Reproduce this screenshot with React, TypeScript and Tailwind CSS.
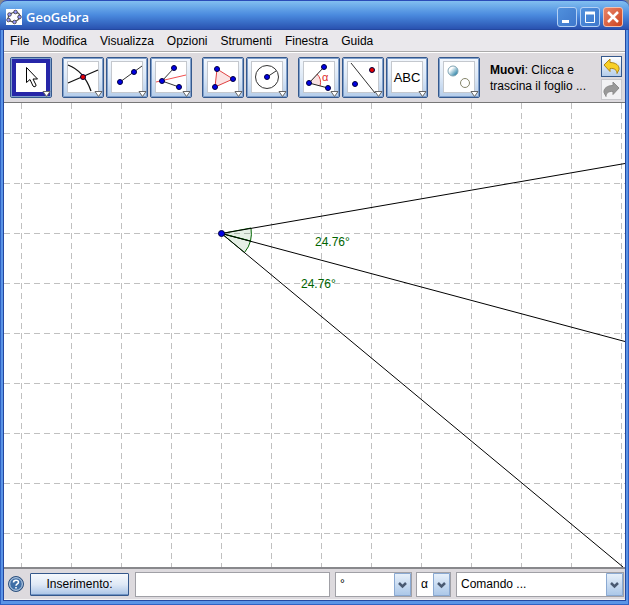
import type { ReactNode } from "react";

const menus = ["File", "Modifica", "Visualizza", "Opzioni", "Strumenti", "Finestra", "Guida"];

const BLUE = "#0000e6";
const RED = "#e60000";

function Dot({ x, y, fill = BLUE, r = 2.5 }: { x: number; y: number; fill?: string; r?: number }) {
  return <circle cx={x} cy={y} r={r} fill={fill} stroke="#000040" strokeWidth="1" />;
}

type Tool = { name: string; icon: ReactNode };

const toolGroups: Tool[][] = [
  [
    {
      name: "Muovi",
      icon: (
        <path
          d="M16.5 10.5v15l3.5-3 3 6.5c1 1.5 3.5.5 3-1l-3-6h4.5z"
          fill="#fff"
          stroke="#000"
          strokeWidth="1"
        />
      ),
    },
  ],
  [
    {
      name: "Intersezione",
      icon: (
        <>
          <path d="M6 8Q22 14 29 34M6 26L36 13" fill="none" stroke="#111" strokeWidth="1.3" />
          <Dot x={21} y={20} fill={RED} />
        </>
      ),
    },
    {
      name: "Segmento",
      icon: (
        <>
          <path d="M14 25L36 9" stroke="#333" />
          <Dot x={14} y={25} />
          <Dot x={28} y={15} />
        </>
      ),
    },
    {
      name: "Bisettrice",
      icon: (
        <>
          <path d="M24 11L12 24L29 30" fill="none" stroke="#333" />
          <path d="M6 25L36 18" stroke="#f05050" />
          <Dot x={12} y={24} />
          <Dot x={24} y={11} />
          <Dot x={29} y={30} />
        </>
      ),
    },
  ],
  [
    {
      name: "Poligono",
      icon: (
        <>
          <path d="M15 12L31 22L13 30z" fill="#fae3e3" stroke="#e04040" />
          <Dot x={15} y={12} />
          <Dot x={31} y={22} />
          <Dot x={13} y={30} />
        </>
      ),
    },
    {
      name: "Circonferenza",
      icon: (
        <>
          <circle cx="21" cy="20" r="11.5" fill="none" stroke="#333" />
          <path d="M21 20L30 14" stroke="#333" />
          <Dot x={21} y={20} />
        </>
      ),
    },
  ],
  [
    {
      name: "Angolo",
      icon: (
        <>
          <path d="M11 26L19 17Q24 22 22 29z" fill="#fae3e3" />
          <path d="M19 17Q24 22 22 29" fill="none" stroke="#e04040" />
          <path d="M26 10L11 26L30 31" fill="none" stroke="#222" />
          <text x="24" y="24" fill="#e03030" className="text-[11px]">α</text>
          <Dot x={11} y={26} />
          <Dot x={26} y={10} />
          <Dot x={30} y={31} />
        </>
      ),
    },
    {
      name: "Simmetria",
      icon: (
        <>
          <path d="M9 6L33 36" stroke="#333" />
          <Dot x={13} y={27} />
          <Dot x={30} y={13} fill={RED} />
        </>
      ),
    },
    {
      name: "Testo",
      icon: (
        <text x="21" y="25" textAnchor="middle" className="text-[13px]">ABC</text>
      ),
    },
  ],
  [
    {
      name: "Mostra / nascondi",
      icon: (
        <>
          <circle cx="15" cy="14" r="5" fill="url(#ball)" stroke="#7fa4b4" />
          <circle cx="27" cy="26" r="4.5" fill="#fff" stroke="#85856a" />
        </>
      ),
    },
  ],
];

function ToolButton({ tool, active }: { tool: Tool; active: boolean }) {
  return (
    <button
      type="button"
      aria-label={tool.name}
      aria-pressed={active}
      className="h-[41px] w-[42px] shrink-0 rounded-[2px] border border-[#34588c] bg-gradient-to-b from-[#f4f8fd] via-[#dce8f6] to-[#b5cdea]"
    >
      <svg viewBox="1 1 40 39" className="block size-full">
        <path d="M1.5 39.5V1.500h39v38z" fill="none" stroke="#7f9fcb" />
        {active ? (
          <rect x="4" y="4" width="34" height="33" fill="#fff" stroke="#2626a8" strokeWidth="4" />
        ) : (
          <rect x="5.5" y="4.5" width="31" height="31" fill="#fff" stroke="#c4c8ce" />
        )}
        {tool.icon}
        <path d="M33 34.500h7l-3.500 5z" fill="#fff" stroke="#666" />
      </svg>
    </button>
  );
}

const logoDots = [
  [9.5, 3],
  [3.5, 5.5],
  [2.5, 11],
  [8.5, 13],
  [13.5, 8],
];

function TitleBar() {
  const control = "flex h-5 w-5 items-center justify-center rounded-[3px] border";
  return (
    <header className="flex h-[30px] items-center rounded-t-[7px] border-t border-b border-t-[#2a4cb8] border-b-[#2448a0] bg-gradient-to-b from-[#82bff0] via-[#4a8ade] to-[#2a52b0] px-1.5 pt-1">
      <svg viewBox="0 0 16 16" className="size-4 bg-white">
        <ellipse cx="8" cy="8" rx="6" ry="4.5" transform="rotate(-18 8 8)" fill="none" stroke="#555" strokeWidth="1.2" />
        {logoDots.map(([x, y]) => (
          <circle key={x} cx={x} cy={y} r="1.8" fill="#9999ff" stroke="#333" strokeWidth="0.8" />
        ))}
      </svg>
      <h1 className="flex-1 pl-1 font-['Open_Sans',sans-serif] text-[13px] leading-5 font-semibold text-white">
        GeoGebra
      </h1>
      <div className="flex gap-[3px]">
        <button type="button" aria-label="Riduci" className={`${control} border-[#b4d0f4] bg-gradient-to-br from-[#5090dc] to-[#3f78cc]`}>
          <svg viewBox="0 0 18 18" className="size-[18px]">
            <path d="M4 13.500h7" stroke="#fff" strokeWidth="3" />
          </svg>
        </button>
        <button type="button" aria-label="Ingrandisci" className={`${control} border-[#b4d0f4] bg-gradient-to-br from-[#5090dc] to-[#3f78cc]`}>
          <svg viewBox="0 0 18 18" className="size-[18px]">
            <path d="M4.500 5v9.500h9V5" fill="none" stroke="#fff" />
            <path d="M4 5h10" stroke="#fff" strokeWidth="3" />
          </svg>
        </button>
        <button type="button" aria-label="Chiudi" className={`${control} border-[#f0c0b0] bg-gradient-to-br from-[#e88468] to-[#cc4018]`}>
          <svg viewBox="0 0 18 18" className="size-[18px]">
            <path d="M4 4l10 10M14 4L4 14" stroke="#fff" strokeWidth="2.5" />
          </svg>
        </button>
      </div>
    </header>
  );
}

function Toolbar() {
  return (
    <div className="flex h-[51px] items-center border-t border-b border-t-white border-b-[#777] bg-[#dddade] pr-[3px] pl-1.5">
      {toolGroups.map((group, i) => (
        <div key={i} className="mr-2.5 flex shrink-0 gap-0.5">
          {group.map((tool) => (
            <ToolButton key={tool.name} tool={tool} active={tool.name === "Muovi"} />
          ))}
        </div>
      ))}
      <p className="min-w-0 flex-1 text-[12px] leading-4">
        <b>Muovi</b>: Clicca e<br />trascina il foglio ...
      </p>
      <div className="flex shrink-0 flex-col gap-0.5">
        <button type="button" aria-label="Annulla" className="h-[21px] w-[21px] border border-[#34588c] bg-gradient-to-b from-white to-[#b5cdea]">
          <svg viewBox="0 0 19 19" className="block size-full">
            <path d="M2 8L8 2v3.500c6 0 9.500 3 9 7l-2 4c0-3.500-2.500-5.500-7-5V14.500z" fill="#f8d028" stroke="#b08818" />
          </svg>
        </button>
        <button type="button" aria-label="Ripristina" disabled className="h-[21px] w-[21px] border border-[#c8c8cc] bg-[#f2f2f4]">
          <svg viewBox="0 0 19 19" className="block size-full">
            <path d="M17 8L11 2v3.500c-6 0-9.500 3-9 7l2 4c0-3.500 2.500-5.500 7-5V14.500z" fill="#999" stroke="#8c8c8c" />
          </svg>
        </button>
      </div>
    </div>
  );
}

const gridLines = Array.from({ length: 60 }, (_, i) => i * 50);

function DrawingPad() {
  return (
    <main className="min-h-0 flex-1 overflow-hidden bg-white">
      <svg width="100%" height="100%" className="block" role="img" aria-label="Foglio da disegno">
        <g stroke="#c0c0c0" strokeDasharray="6 4" shapeRendering="crispEdges">
          {gridLines.map((n) => (
            <line key={`v${n}`} x1={n + 17.5} x2={n + 17.5} y1="0" y2="2000" />
          ))}
          {gridLines.map((n) => (
            <line key={`h${n}`} x1="0" x2="3000" y1={n + 30.5} y2={n + 30.5} />
          ))}
        </g>
        <g fill="#006400" fillOpacity="0.1" stroke="#006400">
          <path d="M217.500 130.500L247 125Q248 132 246.500 138z" />
          <path d="M217.500 130.500L246.500 138Q245 144 240.500 149.500z" />
        </g>
        <g stroke="#000" strokeWidth="1">
          <line x1="217.5" y1="130.5" x2="621" y2="60.5" />
          <line x1="217.5" y1="130.5" x2="621" y2="238.5" />
          <line x1="217.5" y1="130.5" x2="619" y2="464" />
        </g>
        <Dot x={217.5} y={130.5} r={3} />
        <g fill="#006400" className="text-[12px]">
          <text x="311" y="143">24.76°</text>
          <text x="297" y="185">24.76°</text>
        </g>
      </svg>
    </main>
  );
}

function Choice({ label, value, className }: { label: string; value: string; className: string }) {
  return (
    <div className={`relative h-[25px] ${className}`}>
      <select aria-label={label} className="block size-full appearance-none border border-[#a0a0a6] bg-white pl-1 text-[12px]">
        <option>{value}</option>
      </select>
      <svg viewBox="0 0 17 23" className="pointer-events-none absolute top-px right-px h-[23px] w-[17px] bg-gradient-to-b from-[#eaf2fb] to-[#a9c6e8]">
        <path d="M.5.5h16v22H.5z" fill="none" stroke="#8aa9d2" />
        <path d="M5 10l3.500 3.500L12 10" fill="none" stroke="#4a5a72" strokeWidth="2.5" />
      </svg>
    </div>
  );
}

function InputBar() {
  return (
    <footer className="flex h-[33px] items-center border-t-2 border-b border-t-[#88888c] border-b-[#f4f4f6] bg-[#dddade] pr-px pl-1">
      <button type="button" aria-label="Aiuto" className="size-4 shrink-0">
        <svg viewBox="0 0 16 16" className="block size-full">
          <circle cx="8" cy="8" r="7.500" fill="#3f6ea6" stroke="#30527e" />
          <circle cx="8" cy="8" r="6.300" fill="none" stroke="#c8d8ea" />
          <path d="M5.500 6.500C5.500 3.500 10.500 3.500 10.500 6.200C10.500 8 8 7.800 8 9.800M8 11v1.600" fill="none" stroke="#fff" strokeWidth="1.6" />
        </svg>
      </button>
      <button type="button" className="ml-1.5 h-[23px] w-[99px] shrink-0 rounded-[1px] border border-[#34588c] bg-gradient-to-b from-[#f6f9fd] via-[#dfe9f6] to-[#a9c4e6] text-[12px] shadow-[inset_0_-1px_0_#6f93c4]">
        Inserimento:
      </button>
      <input aria-label="Inserimento" className="ml-1.5 h-[25px] min-w-0 flex-1 border border-[#a0a0a6] bg-white px-1 text-[12px]" />
      <Choice label="Operatore" value="°" className="ml-[5px] w-[77px]" />
      <Choice label="Lettera greca" value="α" className="ml-1 w-[35px]" />
      <Choice label="Comando" value="Comando ..." className="ml-[5px] w-[168px]" />
    </footer>
  );
}

export default function App() {
  return (
    <div className="flex h-screen flex-col bg-[#8a8a8a] font-['Liberation_Sans',Arial,sans-serif] text-black">
      <svg width="0" height="0" className="absolute">
        <defs>
          <linearGradient id="ball" x1="0" y1="0" x2="1" y2="1">
            <stop offset="0.3" stopColor="#fff" />
            <stop offset="0.8" stopColor="#3f8fb0" />
          </linearGradient>
        </defs>
      </svg>
      <TitleBar />
      <div className="flex min-h-0 flex-1 flex-col border-x border-b border-[#2f62c4] bg-[#5a94e6] px-0.5 pb-[3px]">
        <div className="flex min-h-0 flex-1 flex-col border-x border-b border-[#2448a0]">
          <nav className="flex h-[22px] items-center gap-[13px] border-b border-[#aaa] bg-[#eae8ec] px-1.5 text-[12px]">
            {menus.map((menu) => (
              <button type="button" key={menu}>{menu}</button>
            ))}
          </nav>
          <Toolbar />
          <DrawingPad />
          <InputBar />
        </div>
      </div>
    </div>
  );
}
